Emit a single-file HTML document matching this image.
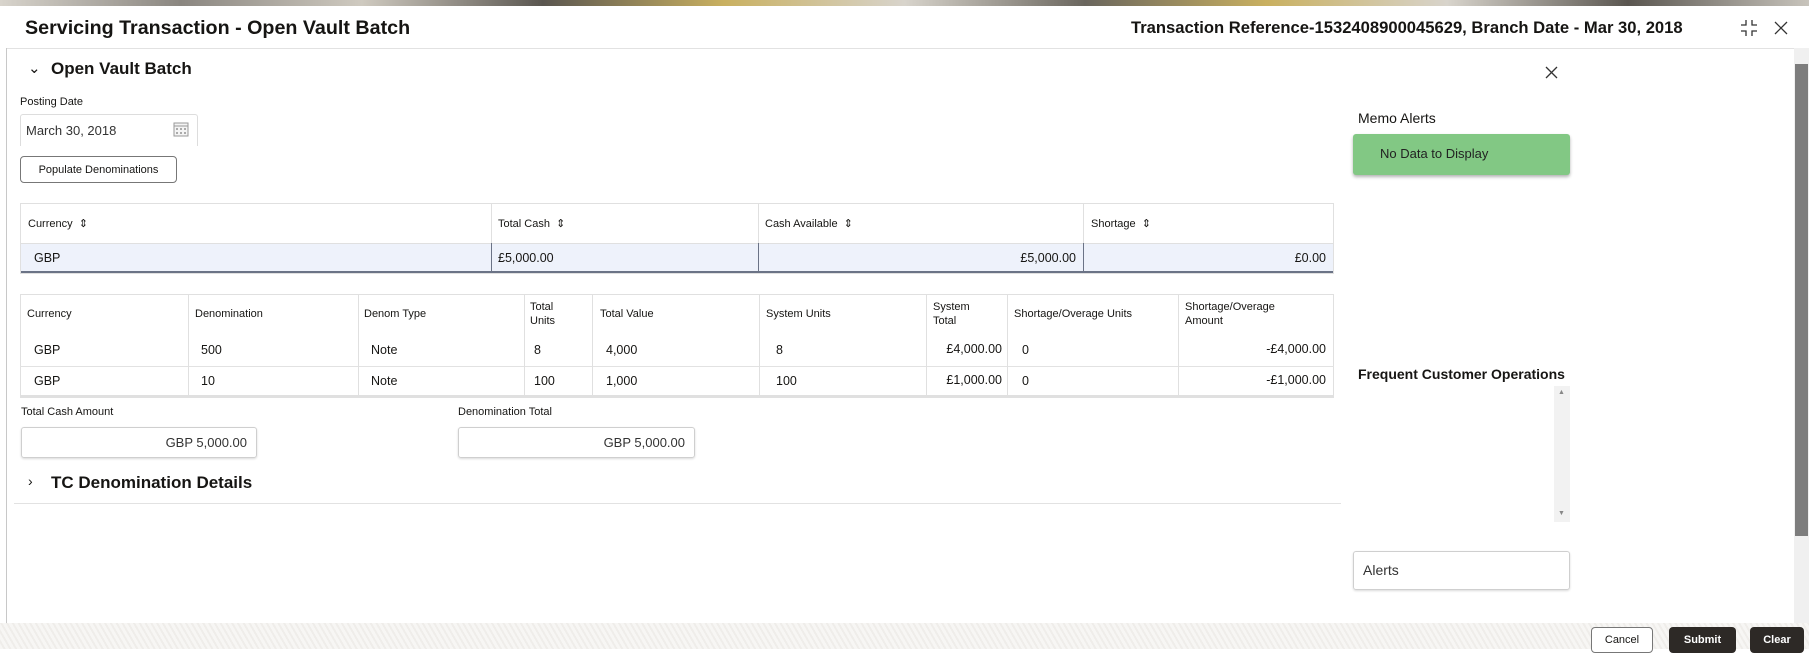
<!DOCTYPE html>
<html><head><meta charset="utf-8"><style>
*{box-sizing:border-box;margin:0;padding:0}
body{width:1809px;height:649px;overflow:hidden;background:#fff;font-family:"Liberation Sans",sans-serif;color:#161513;position:relative}
.a{position:absolute}
.strip{left:0;top:0;width:1809px;height:6px;background:linear-gradient(90deg,#d8d4cc,#8a8680 10%,#cfcac0 20%,#5a5650 30%,#c9b060 40%,#d8d4cc 50%,#6a665e 60%,#c9b060 70%,#d8d4cc 80%,#5a5650 90%,#c8c4bc)}
.hline{height:1px;background:#e2e2e2}
.t{font-size:11px;color:#161513}
.tab{border:1px solid #e0e0e0}
.cell{position:absolute;font-size:12.5px}
.vl{position:absolute;width:1px;background:#e0e0e0}
.box{border:1px solid #cfcfcf;border-radius:3px;box-shadow:0 1px 2px rgba(0,0,0,.15)}
.btn{position:absolute;font-size:11px;font-weight:bold;display:flex;align-items:center;justify-content:center;border-radius:4px}
</style></head><body>
<div class="a strip"></div>
<div class="a" style="left:25px;top:17px;font-size:19.7px;font-weight:bold;color:#161513">Servicing Transaction - Open Vault Batch</div>
<div class="a" style="left:1131px;top:18px;font-size:16.6px;font-weight:bold">Transaction Reference-1532408900045629, Branch Date - Mar 30, 2018</div>
<svg class="a" style="left:1740px;top:19px" width="18" height="18" viewBox="0 0 18 18" fill="none" stroke="#333" stroke-width="1.3"><path d="M6 1v5H1M12 1v5h5M6 17v-5H1M12 17v-5h5"/></svg>
<svg class="a" style="left:1774px;top:21px" width="14" height="14" viewBox="0 0 14 14" stroke="#333" stroke-width="1.3"><path d="M1 1l12 12M13 1L1 13"/></svg>
<div class="a hline" style="left:6px;top:48px;width:1803px"></div>
<div class="a" style="left:6px;top:48px;width:1px;height:575px;background:#c8c8c8"></div>
<div class="a" style="left:28px;top:59px;font-size:15px">⌄</div>
<div class="a" style="left:51px;top:59px;font-size:17px;font-weight:bold">Open Vault Batch</div>
<div class="a t" style="left:20px;top:96px;font-size:11px">Posting Date</div>
<div class="a" style="left:20px;top:114px;width:178px;height:32px;border:1px solid #ddd;border-bottom:none;border-radius:3px 3px 0 0"></div>
<div class="a" style="left:26px;top:123px;font-size:13px;color:#333">March 30, 2018</div>
<svg class="a" style="left:173px;top:121px" width="16" height="16" viewBox="0 0 16 16"><rect x="1" y="2" width="14" height="13" fill="#f4f4f4" stroke="#999"/><path d="M1 5h14" stroke="#999"/><g fill="#aaa"><rect x="3" y="7" width="2" height="2"/><rect x="7" y="7" width="2" height="2"/><rect x="11" y="7" width="2" height="2"/><rect x="3" y="11" width="2" height="2"/><rect x="7" y="11" width="2" height="2"/><rect x="11" y="11" width="2" height="2"/></g></svg>
<div class="btn" style="left:20px;top:156px;width:157px;height:27px;border:1px solid #777;font-weight:normal;font-size:11px">Populate Denominations</div>

<div class="a tab" style="left:20px;top:203px;width:1314px;height:71px"></div>
<div class="a" style="left:21px;top:243px;width:1312px;height:30px;background:#eef2fb;border-top:1px solid #e0e0e0;border-bottom:2px solid #6b7386"></div>
<div class="vl" style="left:491px;top:203px;height:40px"></div><div class="vl" style="left:758px;top:203px;height:40px"></div><div class="vl" style="left:1083px;top:203px;height:40px"></div>
<div class="vl" style="left:491px;top:243px;height:30px;background:#6b7386"></div><div class="vl" style="left:758px;top:243px;height:30px;background:#6b7386"></div><div class="vl" style="left:1083px;top:243px;height:30px;background:#6b7386"></div>
<div class="cell t" style="left:28px;top:217px;font-size:11px">Currency &nbsp;⇕</div>
<div class="cell t" style="left:498px;top:217px;font-size:11px">Total Cash &nbsp;⇕</div>
<div class="cell t" style="left:765px;top:217px;font-size:11px">Cash Available &nbsp;⇕</div>
<div class="cell t" style="left:1091px;top:217px;font-size:11px">Shortage &nbsp;⇕</div>
<div class="cell" style="left:34px;top:251px">GBP</div>
<div class="cell" style="left:498px;top:251px">£5,000.00</div>
<div class="cell" style="left:758px;top:251px;width:318px;text-align:right">£5,000.00</div>
<div class="cell" style="left:1083px;top:251px;width:243px;text-align:right">£0.00</div>

<div class="a tab" style="left:20px;top:294px;width:1314px;height:104px;border-bottom:3px solid #e0e0e0"></div>
<div class="a hline" style="left:20px;top:366px;width:1314px"></div>
<div class="vl" style="left:188px;top:294px;height:102px"></div><div class="vl" style="left:358px;top:294px;height:102px"></div><div class="vl" style="left:524px;top:294px;height:102px"></div><div class="vl" style="left:592px;top:294px;height:102px"></div><div class="vl" style="left:759px;top:294px;height:102px"></div><div class="vl" style="left:926px;top:294px;height:102px"></div><div class="vl" style="left:1007px;top:294px;height:102px"></div><div class="vl" style="left:1178px;top:294px;height:102px"></div>
<div class="cell t" style="left:27px;top:308px;font-size:11px">Currency</div>
<div class="cell t" style="left:195px;top:308px;font-size:11px">Denomination</div>
<div class="cell t" style="left:364px;top:308px;font-size:11px">Denom Type</div>
<div class="cell t" style="left:530px;top:300px;font-size:11px;line-height:14px">Total<br>Units</div>
<div class="cell t" style="left:600px;top:308px;font-size:11px">Total Value</div>
<div class="cell t" style="left:766px;top:308px;font-size:11px">System Units</div>
<div class="cell t" style="left:933px;top:300px;font-size:11px;line-height:14px">System<br>Total</div>
<div class="cell t" style="left:1014px;top:308px;font-size:11px">Shortage/Overage Units</div>
<div class="cell t" style="left:1185px;top:300px;font-size:11px;line-height:14px">Shortage/Overage<br>Amount</div>
<div class="cell" style="left:34px;top:343px">GBP</div><div class="cell" style="left:201px;top:343px">500</div><div class="cell" style="left:371px;top:343px">Note</div><div class="cell" style="left:534px;top:343px">8</div><div class="cell" style="left:606px;top:343px">4,000</div><div class="cell" style="left:776px;top:343px">8</div><div class="cell" style="left:926px;top:342px;width:76px;text-align:right">£4,000.00</div><div class="cell" style="left:1022px;top:343px">0</div><div class="cell" style="left:1178px;top:342px;width:148px;text-align:right">-£4,000.00</div>
<div class="cell" style="left:34px;top:374px">GBP</div><div class="cell" style="left:201px;top:374px">10</div><div class="cell" style="left:371px;top:374px">Note</div><div class="cell" style="left:534px;top:374px">100</div><div class="cell" style="left:606px;top:374px">1,000</div><div class="cell" style="left:776px;top:374px">100</div><div class="cell" style="left:926px;top:373px;width:76px;text-align:right">£1,000.00</div><div class="cell" style="left:1022px;top:374px">0</div><div class="cell" style="left:1178px;top:373px;width:148px;text-align:right">-£1,000.00</div>

<div class="a t" style="left:21px;top:406px;font-size:11px">Total Cash Amount</div>
<div class="a t" style="left:458px;top:406px;font-size:11px">Denomination Total</div>
<div class="a box" style="left:21px;top:427px;width:236px;height:31px"></div>
<div class="a" style="left:21px;top:435px;width:226px;text-align:right;font-size:13px;color:#333">GBP 5,000.00</div>
<div class="a box" style="left:458px;top:427px;width:237px;height:31px"></div>
<div class="a" style="left:458px;top:435px;width:227px;text-align:right;font-size:13px;color:#333">GBP 5,000.00</div>
<div class="a" style="left:28px;top:473px;font-size:14px">›</div>
<div class="a" style="left:51px;top:473px;font-size:17px;font-weight:bold">TC Denomination Details</div>
<div class="a hline" style="left:14px;top:503px;width:1327px"></div>

<svg class="a" style="left:1545px;top:66px" width="13" height="13" viewBox="0 0 13 13" stroke="#333" stroke-width="1.3"><path d="M1 1l11 11M12 1L1 12"/></svg>
<div class="a" style="left:1358px;top:110px;font-size:14px">Memo Alerts</div>
<div class="a" style="left:1353px;top:134px;width:217px;height:41px;background:#82c884;border-radius:3px;box-shadow:0 2px 3px rgba(0,0,0,.3);font-size:13px;padding:12px 0 0 27px;color:#222">No Data to Display</div>
<div class="a" style="left:1358px;top:366px;font-size:14px;font-weight:bold">Frequent Customer Operations</div>
<div class="a" style="left:1554px;top:386px;width:16px;height:136px;background:#f2f2f2"></div>
<div class="a" style="left:1558px;top:389px;font-size:7px;color:#888">▲</div>
<div class="a" style="left:1558px;top:510px;font-size:7px;color:#888">▼</div>
<div class="a box" style="left:1353px;top:551px;width:217px;height:39px;font-size:14px;padding:10px 0 0 9px;color:#333">Alerts</div>

<div class="a" style="left:1794px;top:48px;width:15px;height:575px;background:#f0f0f0"></div>
<div class="a" style="left:1795px;top:64px;width:13px;height:472px;background:#7d7d7d"></div>

<div class="a" style="left:0;top:623px;width:1809px;height:26px;background:repeating-linear-gradient(60deg,#f7f6f4 0 3px,#efedea 3px 5px)"></div>
<div class="btn" style="left:1591px;top:627px;width:62px;height:26px;border:1px solid #777;background:#fff;font-weight:normal">Cancel</div>
<div class="btn" style="left:1669px;top:627px;width:67px;height:26px;background:#2d2926;color:#fff">Submit</div>
<div class="btn" style="left:1750px;top:627px;width:54px;height:26px;background:#2d2926;color:#fff">Clear</div>
</body></html>
